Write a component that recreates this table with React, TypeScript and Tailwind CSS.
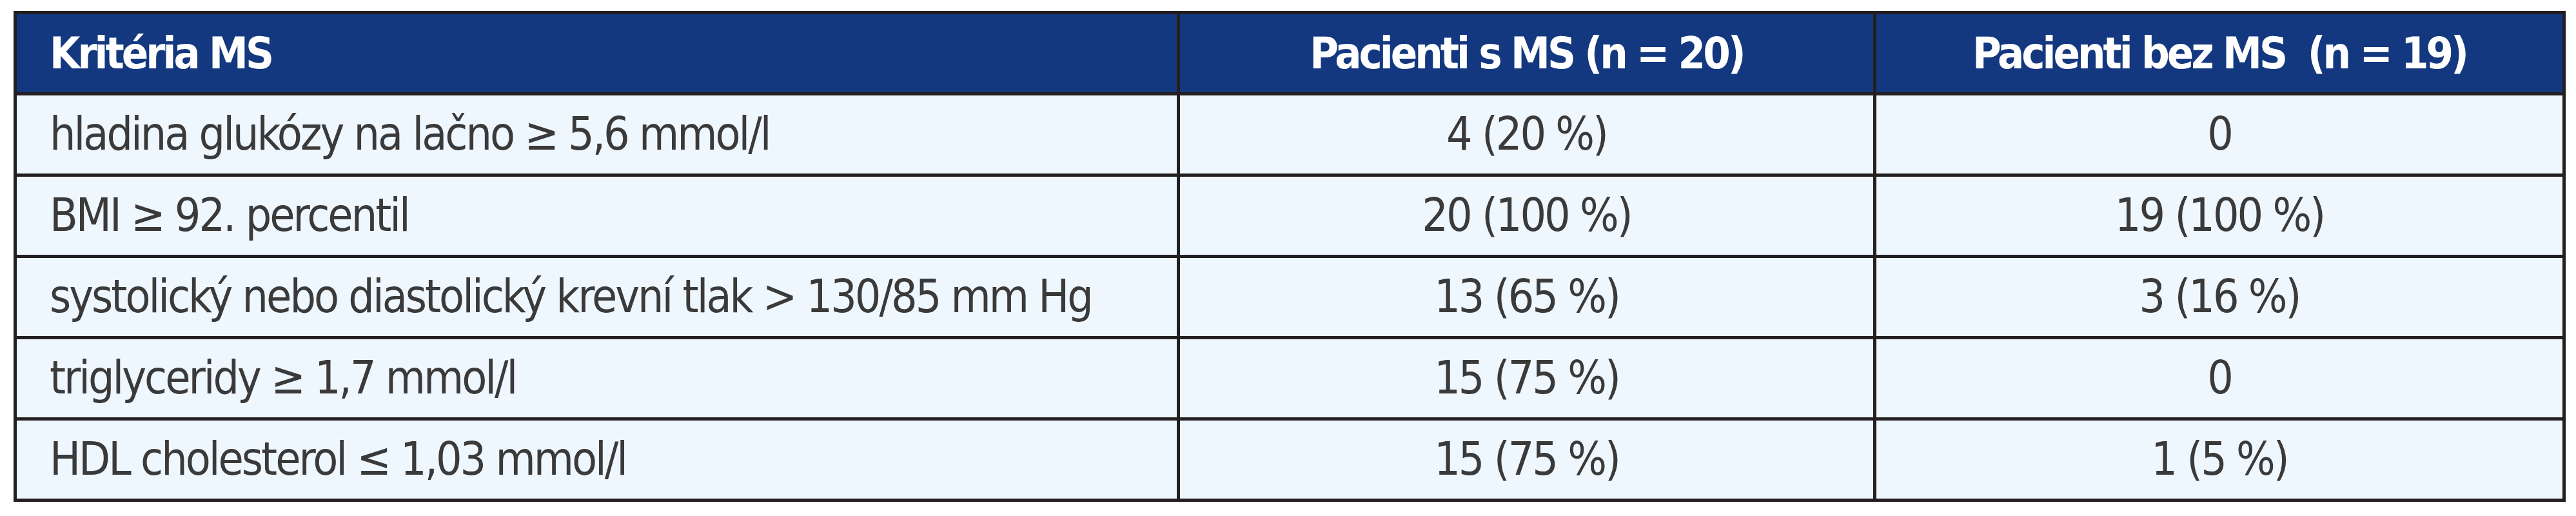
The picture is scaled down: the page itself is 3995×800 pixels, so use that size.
import React from 'react';

interface Row {
  label: string;
  withMs: string;
  withoutMs: string;
}

const rows: Row[] = [
  { label: 'hladina glukózy na lačno ≥ 5,6 mmol/l', withMs: '4 (20 %)', withoutMs: '0' },
  { label: 'BMI ≥ 92. percentil', withMs: '20 (100 %)', withoutMs: '19 (100 %)' },
  { label: 'systolický nebo diastolický krevní tlak > 130/85 mm Hg', withMs: '13 (65 %)', withoutMs: '3 (16 %)' },
  { label: 'triglyceridy ≥ 1,7 mmol/l', withMs: '15 (75 %)', withoutMs: '0' },
  { label: 'HDL cholesterol ≤ 1,03 mmol/l', withMs: '15 (75 %)', withoutMs: '1 (5 %)' },
];

const App: React.FC = () => {
  return (
    <div className="w-[3995px] h-[800px] bg-white pt-[17px] pl-[21px] font-['DejaVu_Sans_Condensed','DejaVu_Sans',sans-serif] font-stretch-condensed">
      <div className="grid w-[3958px] grid-cols-[1799px_1075px_1064px] gap-[5px] bg-[#231f20] p-[5px]">
        {/* header */}
        <div className="flex h-[121px] items-center whitespace-nowrap bg-[#14387f] pl-[51px] text-[68px] font-bold tracking-[-4px] text-white">
          Kritéria MS
        </div>
        <div className="flex h-[121px] items-center justify-center whitespace-nowrap bg-[#14387f] text-[68px] font-bold tracking-[-4px] text-white">
          Pacienti s MS (n = 20)
        </div>
        <div className="flex h-[121px] items-center justify-center whitespace-pre bg-[#14387f] text-[68px] font-bold tracking-[-4px] text-white">
          Pacienti bez MS  (n = 19)
        </div>

        {rows.map((row) => (
          <React.Fragment key={row.label}>
            <div className="flex h-[121px] items-center whitespace-nowrap bg-[#eff7fe] pl-[51px] text-[71px] tracking-[-3px] text-[#3a3a3a]">
              {row.label}
            </div>
            <div className="flex h-[121px] items-center justify-center whitespace-nowrap bg-[#eff7fe] text-[71px] tracking-[-3px] text-[#3a3a3a]">
              {row.withMs}
            </div>
            <div className="flex h-[121px] items-center justify-center whitespace-nowrap bg-[#eff7fe] text-[71px] tracking-[-3px] text-[#3a3a3a]">
              {row.withoutMs}
            </div>
          </React.Fragment>
        ))}
      </div>
    </div>
  );
};

export default App;
